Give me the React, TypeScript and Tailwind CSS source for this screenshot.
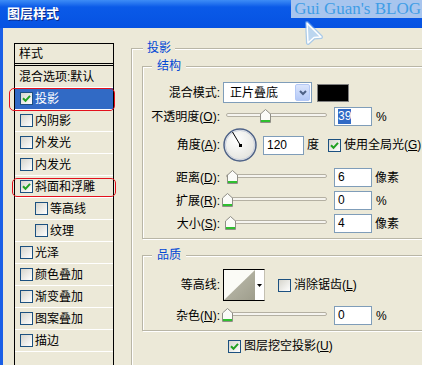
import React from 'react';

const FONT = "font-['Liberation_Sans','Noto_Sans_CJK_SC',sans-serif]";

type StyleItem = {
  name: string;
  checked?: boolean;
  selected?: boolean;
  sub?: boolean;
  ring?: string;
};

const styleItems: StyleItem[] = [
  { name: '投影', checked: true, selected: true, ring: '-left-[6px] -right-[2px] top-0 -bottom-[2px]' },
  { name: '内阴影' },
  { name: '外发光' },
  { name: '内发光' },
  { name: '斜面和浮雕', checked: true, ring: '-left-[3px] -right-[3px] top-[2px] bottom-0' },
  { name: '等高线', sub: true },
  { name: '纹理', sub: true },
  { name: '光泽' },
  { name: '颜色叠加' },
  { name: '渐变叠加' },
  { name: '图案叠加' },
  { name: '描边' },
];

const Check = ({ checked }: { checked?: boolean }) => (
  <span className="flex h-[13px] w-[13px] shrink-0 items-center justify-center border border-[#1c5180] bg-linear-to-br from-[#d6d5cd] to-white">
    {checked && (
      <svg width="9" height="9" viewBox="0 0 9 9">
        <path d="M1 4.2 L3.5 6.8 L8 1.8" fill="none" stroke="#21a121" strokeWidth="2" />
      </svg>
    )}
  </span>
);

const Slider = ({ thumb }: { thumb: string }) => (
  <div className="relative ml-[3px] h-[19px] w-[106px] shrink-0">
    <div className="absolute left-[3px] right-[2px] top-[6px] h-[4px] rounded-full border border-[#b4b0a2] bg-[#f5f4ef]" />
    <svg className={`absolute top-[2px] ${thumb}`} width="11" height="14" viewBox="0 0 11 14">
      <path d="M0.5 5 L5.5 0.5 L10.5 5 V13.5 H0.5 Z" fill="#fbfbf8" stroke="#8f8e86" />
      <path d="M1 12 H10" stroke="#2fbf2f" strokeWidth="2" />
    </svg>
  </div>
);

const Field = ({ children, className }: { children: React.ReactNode; className: string }) => (
  <div className={`flex h-[19px] shrink-0 items-center border border-[#7f9db9] bg-white pl-[3px] leading-[15px] ${className}`}>
    {children}
  </div>
);

const Label = ({ children }: { children: React.ReactNode }) => (
  <span className="w-[77px] shrink-0 text-right">{children}</span>
);

const App = () => {
  return (
    <div className={`relative flex h-[365px] w-[422px] flex-col overflow-hidden text-[12px] leading-[16px] text-black ${FONT}`}>
      {/* title bar */}
      <div className="flex h-[28px] shrink-0 items-center bg-linear-to-b from-[#3d8cf6] via-[#0a5ae8] via-25% to-[#0652e2] pl-[7px]">
        <span className="text-[13px] font-bold text-white [text-shadow:1px_1px_0_#0a2a8a]">图层样式</span>
      </div>

      {/* watermark */}
      <div className="absolute right-0 top-0 h-[18px] bg-[#a8c5ee] pl-[3px] pr-[1px] font-['Liberation_Serif',serif] text-[17px] leading-[18px] text-[#3f9de6]">
        Gui Guan's BLOG
      </div>
      <svg className="absolute left-[302px] top-[19px]" width="24" height="28" viewBox="0 0 24 28">
        <polygon points="5,4 19,18 12,18.5 6,24" fill="none" stroke="#7fb6f2" strokeWidth="4" strokeLinejoin="round" opacity="0.6" />
        <polygon points="5,4 19,18 12,18.5 6,24" fill="#bcd6ef" stroke="#ffffff" strokeWidth="1.5" strokeLinejoin="round" />
      </svg>

      <div className="flex flex-1 items-start border-l-[3px] border-[#1a5fe6] bg-[#ece9d8]">
        {/* styles list */}
        <div className="ml-[11px] mt-[15px] w-[100px] shrink-0 border border-black">
          <div className="flex h-[22px] items-center border-b-[3px] border-double border-black pl-[4px]">样式</div>
          <div className="flex h-[22px] items-center border-b border-white pl-[4px]">混合选项:默认</div>
          {styleItems.map((item) => (
            <div
              key={item.name}
              className={`relative flex h-[22px] items-center gap-[2px] border-b border-white ${item.sub ? 'pl-[20px]' : 'pl-[5px]'} ${item.selected ? 'bg-[#316ac5] text-white' : ''}`}
            >
              <Check checked={item.checked} />
              <span>{item.name}</span>
              {item.ring && <div className={`absolute rounded-[5px] border border-[#e3101c] ${item.ring}`} />}
            </div>
          ))}
          <div className="h-[22px]" />
        </div>

        {/* settings */}
        <fieldset className="ml-[17px] mt-[12px] h-[360px] w-[320px] shrink-0 border border-[#b9b6a6] pt-[2px] shadow-[inset_1px_1px_0_#fff,1px_1px_0_#fff]">
          <legend className="ml-[11px] bg-[#ece9d8] px-[4px] text-[#0046d5]">投影</legend>

          <fieldset className="ml-[10px] w-[300px] border border-[#b9b6a6] pb-[5px] pt-[8px] shadow-[inset_1px_1px_0_#fff,1px_1px_0_#fff]">
            <legend className="ml-[9px] bg-[#ece9d8] px-[5px] text-[#0046d5]">结构</legend>

            <div className="flex h-[21px] items-center">
              <Label>混合模式:</Label>
              <div className="ml-[3px] flex h-[21px] w-[89px] items-center border border-[#7f9db9] bg-white">
                <span className="flex-1 pl-[6px]">正片叠底</span>
                <span className="mr-[1px] flex h-[17px] w-[15px] items-center justify-center rounded-[2px] border border-[#b4c8f6] bg-linear-to-b from-[#dbe5fc] to-[#b3c8f6]">
                  <svg width="8" height="6" viewBox="0 0 8 6">
                    <path d="M1 1 L4 4 L7 1" fill="none" stroke="#4d6185" strokeWidth="2" />
                  </svg>
                </span>
              </div>
              <div className="ml-[5px] h-[18px] w-[32px] border border-[#808080] bg-black" />
            </div>

            <div className="mt-[4px] flex h-[19px] items-center">
              <Label>
                不透明度(<u>O</u>):
              </Label>
              <Slider thumb="left-[37px]" />
              <Field className="ml-[5px] w-[38px]">
                <span className="bg-[#316ac5] text-white">39</span>
              </Field>
              <span className="ml-[4px]">%</span>
            </div>

            <div className="mt-[2px] flex h-[34px] items-center">
              <Label>
                角度(<u>A</u>):
              </Label>
              <svg className="ml-[3px] shrink-0" width="34" height="34" viewBox="0 0 34 34">
                <defs>
                  <radialGradient id="dial" cx="0.4" cy="0.35" r="0.7">
                    <stop offset="0" stopColor="#ffffff" />
                    <stop offset="1" stopColor="#e2e2dc" />
                  </radialGradient>
                </defs>
                <circle cx="17" cy="17" r="16" fill="url(#dial)" stroke="#4e6287" strokeWidth="1.5" />
                <circle cx="17" cy="17" r="14.6" fill="none" stroke="#c9d0de" strokeWidth="1" />
                <path d="M17.5 17.5 L9.5 4" stroke="#000" strokeWidth="1" />
                <rect x="16" y="16" width="3" height="3" fill="#000" />
              </svg>
              <Field className="ml-[6px] h-[18px] w-[41px]">120</Field>
              <span className="ml-[3px]">度</span>
              <span className="ml-[9px]">
                <Check checked />
              </span>
              <span className="ml-[3px] whitespace-nowrap">
                使用全局光(<u>G</u>)
              </span>
            </div>

            <div className="mt-[6px] flex h-[19px] items-center">
              <Label>
                距离(<u>D</u>):
              </Label>
              <Slider thumb="left-[4px]" />
              <Field className="ml-[5px] w-[38px]">6</Field>
              <span className="ml-[3px]">像素</span>
            </div>

            <div className="mt-[4px] flex h-[19px] items-center">
              <Label>
                扩展(<u>R</u>):
              </Label>
              <Slider thumb="-left-[1px]" />
              <Field className="ml-[5px] w-[38px]">0</Field>
              <span className="ml-[4px]">%</span>
            </div>

            <div className="mt-[4px] flex h-[19px] items-center">
              <Label>
                大小(<u>S</u>):
              </Label>
              <Slider thumb="left-[2px]" />
              <Field className="ml-[5px] w-[38px]">4</Field>
              <span className="ml-[3px]">像素</span>
            </div>
          </fieldset>

          <fieldset className="ml-[10px] mt-[8px] w-[300px] border border-[#b9b6a6] pb-[5px] pt-[6px] shadow-[inset_1px_1px_0_#fff,1px_1px_0_#fff]">
            <legend className="ml-[9px] bg-[#ece9d8] px-[5px] text-[#0046d5]">品质</legend>

            <div className="flex h-[32px] items-center">
              <Label>等高线:</Label>
              <div className="ml-[3px] flex h-[32px] w-[42px] shrink-0 border border-black border-r-[#c4c0b2] bg-white">
                <svg width="31" height="30" viewBox="0 0 31 30">
                  <defs>
                    <linearGradient id="contour" x1="0" y1="0" x2="1" y2="1">
                      <stop offset="0" stopColor="#c2c1b2" />
                      <stop offset="1" stopColor="#9e9d8c" />
                    </linearGradient>
                  </defs>
                  <rect width="31" height="30" fill="#fbfbf6" />
                  <polygon points="0,30 31,0 31,30" fill="url(#contour)" />
                </svg>
                <span className="flex flex-1 items-center justify-center">
                  <svg width="5" height="3" viewBox="0 0 5 3">
                    <polygon points="0,0 5,0 2.5,3" fill="#000" />
                  </svg>
                </span>
              </div>
              <span className="ml-[13px]">
                <Check />
              </span>
              <span className="ml-[3px]">
                消除锯齿(<u>L</u>)
              </span>
            </div>

            <div className="mt-[5px] flex h-[19px] items-center">
              <Label>
                杂色(<u>N</u>):
              </Label>
              <Slider thumb="-left-[1px]" />
              <Field className="ml-[5px] w-[38px]">0</Field>
              <span className="ml-[4px]">%</span>
            </div>
          </fieldset>

          <div className="ml-[96px] mt-[7px] flex items-center">
            <Check checked />
            <span className="ml-[3px]">
              图层挖空投影(<u>U</u>)
            </span>
          </div>
        </fieldset>
      </div>
    </div>
  );
};

export default App;
